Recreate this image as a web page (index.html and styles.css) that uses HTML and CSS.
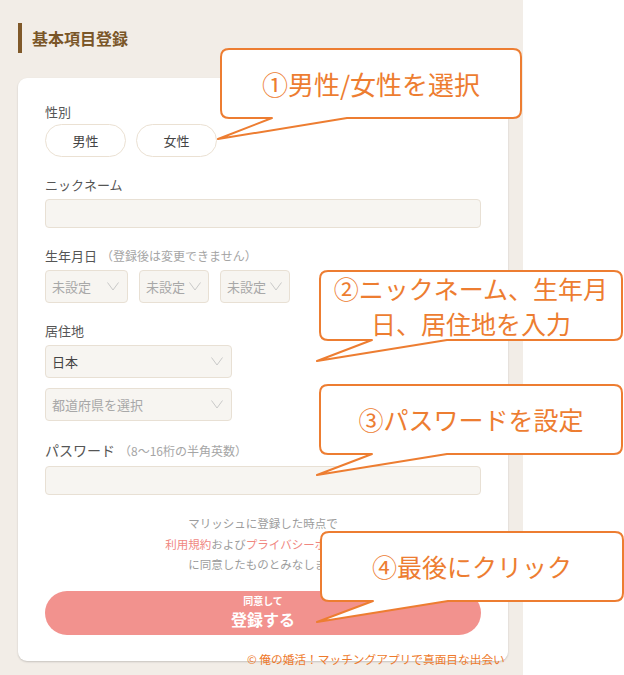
FILE: index.html
```html
<!DOCTYPE html>
<html lang="ja">
  <head>
    <meta charset="UTF-8" />
    <meta name="viewport" content="width=device-width, initial-scale=1.0" />
    <title>基本項目登録</title>
    <link rel="stylesheet" href="styles.css">
  </head>
  <body>
    <div class="page">
      <div class="column">
        <h2 class="section-title">基本項目登録</h2>

        <div class="card">
          <div class="field">
            <div class="label">性別</div>
            <div class="gender-row">
              <button type="button" class="gender-btn">男性</button>
              <button type="button" class="gender-btn">女性</button>
            </div>
          </div>

          <div class="field">
            <div class="label">ニックネーム</div>
            <div class="text-input"></div>
          </div>

          <div class="field">
            <div class="label">生年月日<span class="note">（登録後は変更できません）</span></div>
            <div class="select-row">
              <div class="select placeholder year">未設定
                <svg class="chev" width="12" height="9" viewBox="0 0 12 9"><polyline points="0.5,0.5 6,8 11.5,0.5" /></svg>
              </div>
              <div class="select placeholder small">未設定
                <svg class="chev" width="12" height="9" viewBox="0 0 12 9"><polyline points="0.5,0.5 6,8 11.5,0.5" /></svg>
              </div>
              <div class="select placeholder small">未設定
                <svg class="chev" width="12" height="9" viewBox="0 0 12 9"><polyline points="0.5,0.5 6,8 11.5,0.5" /></svg>
              </div>
            </div>
          </div>

          <div class="field residence">
            <div class="label">居住地</div>
            <div class="select wide">日本
              <svg class="chev" width="12" height="9" viewBox="0 0 12 9"><polyline points="0.5,0.5 6,8 11.5,0.5" /></svg>
            </div>
            <div class="select wide placeholder pref">都道府県を選択
              <svg class="chev" width="12" height="9" viewBox="0 0 12 9"><polyline points="0.5,0.5 6,8 11.5,0.5" /></svg>
            </div>
          </div>

          <div class="field">
            <div class="label big">パスワード<span class="note">（8〜16桁の半角英数）</span></div>
            <div class="text-input"></div>
          </div>

          <div class="terms">
            マリッシュに登録した時点で<br />
            <a href="#">利用規約</a>および<a href="#">プライバシーポリシー</a><br />
            に同意したものとみなします
          </div>

          <button type="submit" class="submit-btn">
            <span class="submit-sub">同意して</span>
            <span class="submit-main">登録する</span>
          </button>
        </div>
      </div>

      <!-- callouts laid over the form -->
      <div class="callout c1">
        <svg width="302" height="71"><path d="M9,1 H293 Q301,1 301,9 V62 Q301,70 293,70 H127 L-2,91 L52,70 H9 Q1,70 1,62 V9 Q1,1 9,1 Z" /></svg>
        <div class="callout-text">①男性/女性を選択</div>
      </div>
      <div class="callout c2">
        <svg width="304" height="71"><path d="M9,1 H295 Q303,1 303,9 V62 Q303,70 295,70 H128 L-2,91 L53,70 H9 Q1,70 1,62 V9 Q1,1 9,1 Z" /></svg>
        <div class="callout-text">②ニックネーム、生年月<br />日、居住地を入力</div>
      </div>
      <div class="callout c3">
        <svg width="304" height="71"><path d="M9,1 H295 Q303,1 303,9 V62 Q303,70 295,70 H128 L-2,91 L53,70 H9 Q1,70 1,62 V9 Q1,1 9,1 Z" /></svg>
        <div class="callout-text">③パスワードを設定</div>
      </div>
      <div class="callout c4">
        <svg width="304" height="71"><path d="M9,1 H295 Q303,1 303,9 V62 Q303,70 295,70 H128 L-3,91 L53,70 H9 Q1,70 1,62 V9 Q1,1 9,1 Z" /></svg>
        <div class="callout-text">④最後にクリック</div>
      </div>

      <div class="credit">© 俺の婚活！マッチングアプリで真面目な出会い</div>
    </div>
  </body>
</html>
```

FILE: styles.css
```css
body {
  margin: 0;
  background-color: #fff;
  font-family: "Noto Sans CJK JP", "Noto Sans", sans-serif;
  color: #444;
}

.page {
  position: relative;
  width: 624px;
  height: 675px;
  overflow: hidden;
}

.column {
  width: 523px;
  height: 675px;
  box-sizing: border-box;
  padding: 23px 15px 0 18px;
  background-color: #f2ede7;
}

.section-title {
  margin: 0 0 25px;
  height: 30px;
  border-left: 4px solid #80592a;
  padding-left: 10px;
  font-size: 16px;
  font-weight: bold;
  line-height: 30px;
  color: #7a5628;
}

.card {
  background-color: white;
  border-radius: 9px;
  box-shadow: 0 1px 2px rgba(0, 0, 0, 0.18);
  padding: 24px 27px 26px;
}

.field {
  margin-bottom: 18px;
}

.field.residence {
  margin-bottom: 19px;
}

.label {
  font-size: 13px;
  line-height: 20px;
  margin-bottom: 4px;
  color: #555;
}

.label.big {
  font-size: 14px;
  margin-bottom: 5px;
}

.note {
  margin-left: 4px;
  font-size: 12px;
  color: #a5a5a5;
}

.gender-row {
  display: flex;
  gap: 10px;
  margin-top: -2px;
}

.gender-btn {
  width: 81px;
  height: 33px;
  border: 1px solid #ebe1d3;
  border-radius: 17px;
  background-color: white;
  font-family: inherit;
  font-size: 13px;
  color: #444;
  padding: 0;
}

.text-input {
  height: 27px;
  background-color: #f7f5f1;
  border: 1px solid #e8e0d4;
  border-radius: 4px;
}

.select-row {
  display: flex;
  gap: 11px;
}

.select {
  display: flex;
  justify-content: space-between;
  align-items: center;
  box-sizing: border-box;
  height: 33px;
  padding: 0 8px 0 6px;
  background-color: #f7f5f1;
  border: 1px solid #e8e0d4;
  border-radius: 4px;
  font-size: 13px;
  color: #444;
}

.select.placeholder {
  color: #a8a8a8;
}

.select.year {
  width: 83px;
}

.select.small {
  width: 70px;
  padding-right: 7px;
}

.select.wide {
  width: 187px;
}

.select.pref {
  margin-top: 10px;
}

.chev {
  fill: none;
  stroke: #c9c9c9;
  stroke-width: 1;
}

.terms {
  text-align: center;
  font-size: 11.5px;
  line-height: 20.5px;
  color: #9c9c9c;
}

.terms a {
  color: #f0877f;
  text-decoration: none;
}

.submit-btn {
  display: flex;
  flex-direction: column;
  align-items: center;
  justify-content: center;
  gap: 2px;
  width: 100%;
  height: 44px;
  margin-top: 16px;
  border: none;
  border-radius: 22px;
  background-color: #f2928e;
  color: white;
  font-family: inherit;
  font-weight: bold;
  padding: 0 0 2px;
}

.submit-sub {
  font-size: 10px;
  line-height: 12px;
}

.submit-main {
  font-size: 16px;
  line-height: 20px;
}

.callout {
  position: absolute;
  width: 304px;
  height: 71px;
}

.callout svg {
  position: absolute;
  left: 0;
  top: 0;
  overflow: visible;
}

.callout path {
  fill: white;
  stroke: #ed7d31;
  stroke-width: 2;
  stroke-linejoin: round;
}

.callout-text {
  position: relative;
  height: 100%;
  display: flex;
  align-items: center;
  justify-content: center;
  text-align: center;
  font-size: 25px;
  line-height: 35px;
  color: #ed7d31;
}

.c1 {
  left: 220px;
  top: 48px;
  width: 302px;
}

.c1 .callout-text {
  font-size: 26px;
}

.c2 {
  left: 319px;
  top: 270px;
}

.c3 {
  left: 319px;
  top: 384px;
}

.c4 {
  left: 320px;
  top: 531px;
}

.credit {
  position: absolute;
  left: 247px;
  top: 650px;
  font-size: 11.7px;
  line-height: 18px;
  color: #ee7a2c;
  white-space: nowrap;
}
```
